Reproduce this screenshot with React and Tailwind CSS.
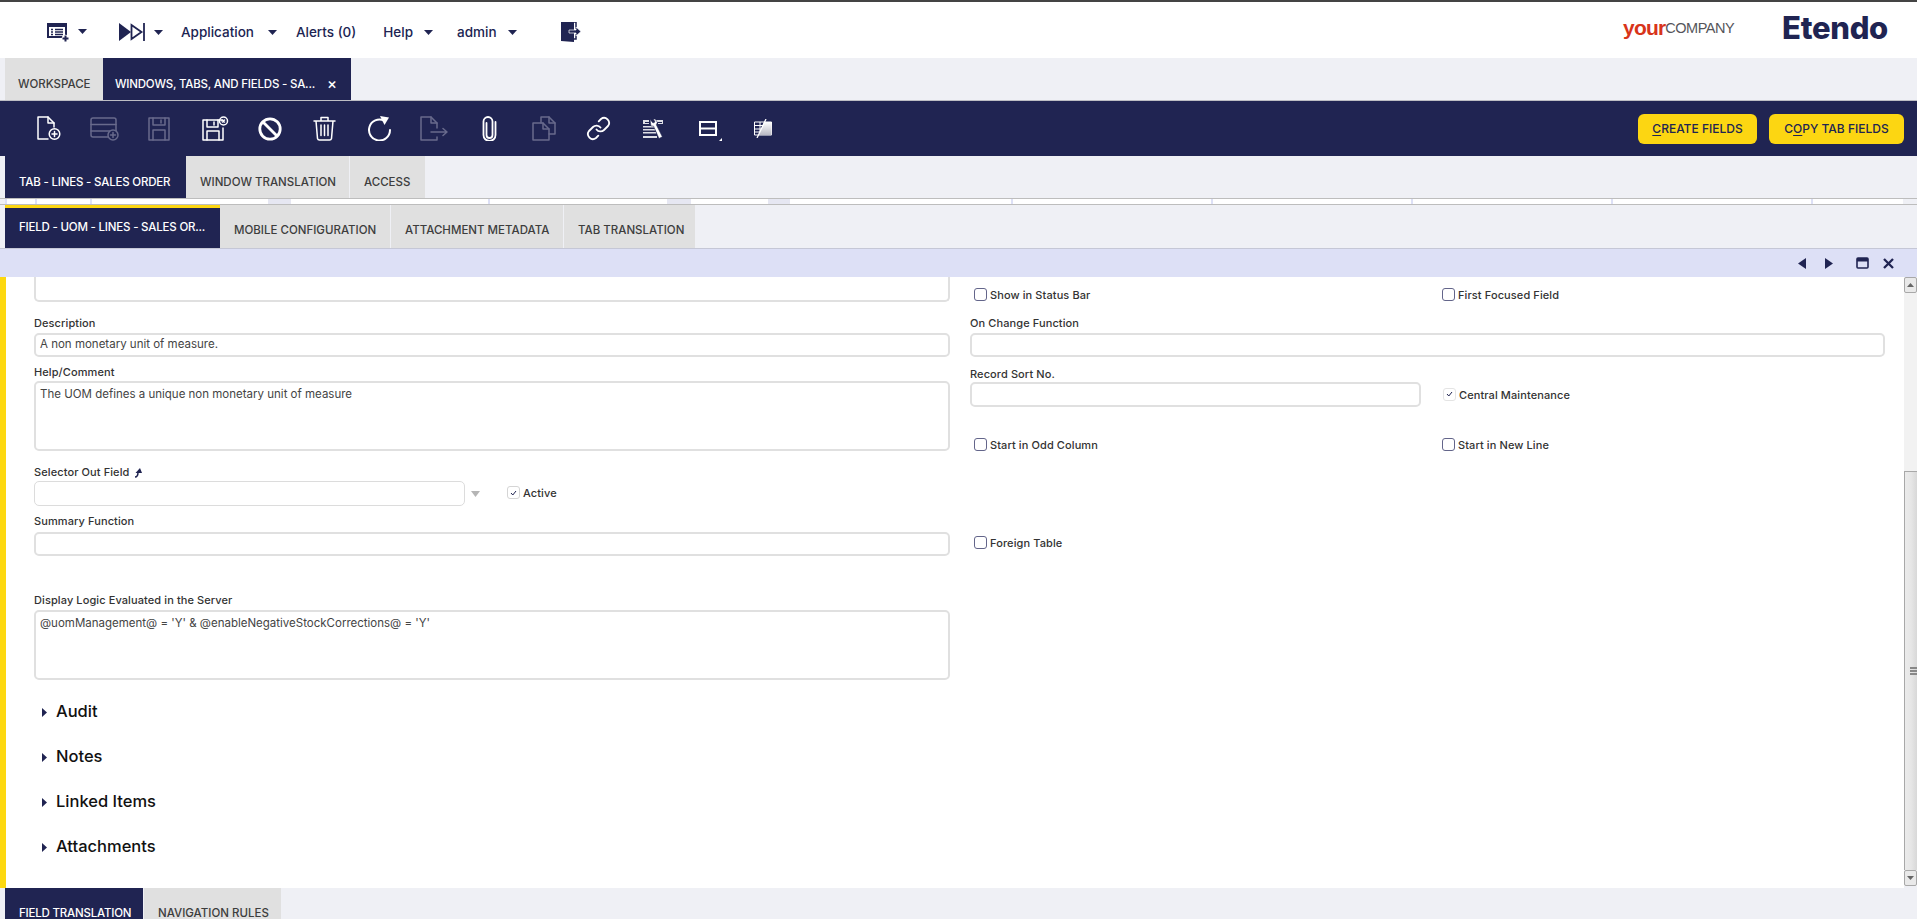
const NAVY = "#202452";

function Caret() {
  return <svg width="9" height="5" viewBox="0 0 9 5" className="shrink-0"><path d="M0 0h9L4.500 5z" fill={NAVY} /></svg>;
}

function NavText({ children, className = "" }) {
  return <span className={"text-[13.500px] font-medium text-[#202452] leading-5 whitespace-nowrap " + className}>{children}</span>;
}

function Header() {
  return (
    <div className="h-[56px] bg-white flex items-center relative">
      <div className="flex items-center h-full pl-[47px] pt-[4px]">
        <svg width="23" height="20" viewBox="0 0 23 20" className="mt-[2px]">
          <path d="M0 0h20v15H0z" fill={NAVY} />
          <path d="M2 4h16v9H2z" fill="#fff" />
          <path d="M4 6.500h2M8 6.500h8M4 9h2M8 9h8M4 11.500h2M8 11.500h8" stroke={NAVY} strokeWidth="1.300" />
          <circle cx="18.500" cy="15.500" r="3.800" fill="#fff" />
          <path d="M18.500 12.500v6M15.500 15.500h6" stroke={NAVY} strokeWidth="2" />
        </svg>
        <span className="ml-[8px] mb-[2px]"><Caret /></span>
        <svg width="26" height="18" viewBox="0 0 26 18" className="ml-[32px]">
          <path d="M0 0l12 9L0 18z" fill={NAVY} />
          <path d="M12.500 2l10 7-10 7z" fill="none" stroke={NAVY} strokeWidth="1.800" />
          <path d="M25 0v18" stroke={NAVY} strokeWidth="1.800" />
        </svg>
        <span className="ml-[9px]"><Caret /></span>
        <NavText className="ml-[18px]">Application</NavText>
        <span className="ml-[14px]"><Caret /></span>
        <NavText className="ml-[19px]">Alerts (0)</NavText>
        <NavText className="ml-[27px]">Help</NavText>
        <span className="ml-[11px]"><Caret /></span>
        <NavText className="ml-[24px]">admin</NavText>
        <span className="ml-[11px]"><Caret /></span>
        <svg width="21" height="20" viewBox="0 0 21 20" className="ml-[44px]">
          <path d="M0 0h13v20l-13-1z" fill={NAVY} />
          <path d="M11 0h4v7" fill="none" stroke={NAVY} strokeWidth="1.500" />
          <path d="M15 12v5h-3" fill="none" stroke={NAVY} strokeWidth="1.500" />
          <path d="M8 8h7V5l5 4.500-5 4.500v-3H8z" fill={NAVY} stroke="#fff" strokeWidth="0.700" />
        </svg>
      </div>
      <div className="ml-auto flex items-center pr-[29px] pb-[6px]">
        <span className="font-[Liberation_Sans,sans-serif] text-[21px] font-bold text-[#d8341a] tracking-[-0.8px] leading-none">your</span>
        <span className="font-[Liberation_Sans,sans-serif] text-[14.500px] text-[#55555a] tracking-[-0.5px] leading-none mt-[2px]">COMPANY</span>
        <span className="ml-[48px] font-[Inter,sans-serif] text-[31px] font-extrabold text-[#202452] tracking-[-0.3px] leading-none">Etendo</span>
      </div>
    </div>
  );
}

function Tab({ label, active, w, pt = "pt-[12px]", pl = "pl-[14px]", h = "h-full", close, top }) {
  return (
    <div
      style={{ width: w }}
      className={
        "shrink-0 flex items-center text-[11.500px] font-medium uppercase whitespace-nowrap overflow-hidden " +
        pl + " " + h + " " +
        (active ? "bg-[#202452] text-white tracking-[-0.2px] " : "bg-[#e0e0e0] text-[#3d3d3d] ") +
        (top ? "border-t-[3px] border-[#fcd612] " : pt)
      }
    >
      {label}
      {close && <span className="ml-[12px] mb-[3px] text-[15px] leading-none">×</span>}
    </div>
  );
}

function Ic({ w, h, dim, children }) {
  return (
    <svg width={w} height={h} viewBox={`0 0 ${w} ${h}`} fill="none" stroke={dim ? "#686a8c" : "#fff"} strokeWidth="1.500" strokeLinecap="round" strokeLinejoin="round" className="shrink-0">
      {children}
    </svg>
  );
}

function Toolbar() {
  return (
    <div className="h-[56px] bg-[#202452] border-t border-[#bdbdc4] flex items-center pl-[37px] pr-[13px]">
      <Ic w={24} h={25}>
        <path d="M11 23H1V1h10l6 6v4" /><path d="M11 1v6h6" />
        <circle cx="17.500" cy="18" r="5.300" /><path d="M17.500 15.500v5M15 18h5" />
      </Ic>
      <span className="ml-[29px]">
        <Ic w={29} h={24} dim>
          <rect x="1" y="1" width="25" height="19" rx="2" /><path d="M1 7.500h25M1 14h25" />
          <circle cx="23" cy="18" r="5" fill={NAVY} /><path d="M23 15.500v5M20.500 18h5" />
        </Ic>
      </span>
      <span className="ml-[28px]">
        <Ic w={24} h={24} dim>
          <path d="M2 1h20v22H2z" /><path d="M6 1v7h12V1M14 3v3M6 23v-10h12v10" />
        </Ic>
      </span>
      <span className="ml-[31px]">
        <Ic w={27} h={25}>
          <path d="M20 5V4H1v20h20V12" /><path d="M5 4v7h11V4M12 6v3M5 24V15h12v9" />
          <circle cx="21.500" cy="5" r="4" /><path d="M20.500 4l2 2M22.500 4l-2 2" />
        </Ic>
      </span>
      <span className="ml-[29px]">
        <Ic w={24} h={24}>
          <circle cx="12" cy="12" r="10.200" strokeWidth="2.800" /><path d="M5 5l14 14" strokeWidth="2.800" strokeLinecap="butt" />
        </Ic>
      </span>
      <span className="ml-[31px]">
        <Ic w={23} h={25}>
          <path d="M1 5h21M8 5V1.500h7V5M3 5l1.500 17.500a2 2 0 0 0 2 1.500h10a2 2 0 0 0 2-1.500L20 5M8 9v10.500M11.500 9v10.500M15 9v10.500" />
        </Ic>
      </span>
      <span className="ml-[31px]">
        <Ic w={25} h={25}>
          <path d="M17 4.500A10.500 10.500 0 1 0 23 14" strokeWidth="2" />
          <path d="M13 0l9 1.500-4.500 7.500z" fill="#fff" stroke="none" />
        </Ic>
      </span>
      <span className="ml-[28px]">
        <Ic w={28} h={25} dim>
          <path d="M17 12V7l-6-6H1v23h16v-3" /><path d="M11 1v6h6M11 16h16M23 12.500l4 3.500-4 3.500" />
        </Ic>
      </span>
      <span className="ml-[33px]">
        <Ic w={17} h={25}>
          <path d="M5.500 7v12a3 3 0 0 0 6 0V5.500a4.500 4.500 0 0 0-9 0V19a6 6 0 0 0 12 0V6" strokeWidth="1.800" />
        </Ic>
      </span>
      <span className="ml-[34px]">
        <Ic w={24} h={25} dim>
          <path d="M9 7V1h8l6 6v11h-6" /><path d="M17 1v6h6" />
          <path d="M1 7h10l6 6v11H1z" /><path d="M11 7v6h6" />
        </Ic>
      </span>
      <span className="ml-[30px]">
        <Ic w={25} h={25}>
          <path d="M10.500 13.500a5 5 0 0 0 7.500.5l4-4a5 5 0 0 0-7-7l-2.300 2.300" strokeWidth="1.800" />
          <path d="M14.500 11.500a5 5 0 0 0-7.500-.5l-4 4a5 5 0 0 0 7 7l2.300-2.300" strokeWidth="1.800" />
        </Ic>
      </span>
      <span className="ml-[32px]">
        <svg width="21" height="20" viewBox="0 0 21 20" className="shrink-0">
          <path d="M0 1h6v2H2v1h4v1H0zM13 1h7v4h-5V4h4V3h-6zM0 7h12v1.500H0zM0 10h12v1.500H0zM0 13h13v1.500H0zM0 17h14v2H0z" fill="#fff" opacity="0.850" />
          <path d="M7 0.500l3 3.500 2-1-1.500-3 1.800 0 2 3.500-1 2.300 6 12-3.300 1.700-5.500-12.500-2.500 0z" fill="#fff" stroke={NAVY} strokeWidth="0.500" />
        </svg>
      </span>
      <span className="ml-[35px] flex items-end">
        <svg width="18" height="15" viewBox="0 0 18 15" className="shrink-0">
          <rect x="1" y="1" width="16" height="13" fill={NAVY} stroke="#fff" strokeWidth="2" />
          <path d="M1 7.500h16" stroke="#fff" strokeWidth="2" />
        </svg>
        <svg width="3" height="3" viewBox="0 0 3 3" className="ml-[2px] mb-[-5px]"><path d="M3 0v3H0z" fill="#fff" /></svg>
      </span>
      <span className="ml-[32px]">
        <svg width="18" height="19" viewBox="0 0 18 19" className="shrink-0">
          <defs>
            <linearGradient id="trg" x1="0" y1="0" x2="0" y2="1"><stop offset="0" stopColor="#fff" /><stop offset="1" stopColor="#b9b9c4" /></linearGradient>
          </defs>
          <path d="M0.500 3h17v13H0.500z" fill="none" stroke="#fff" strokeWidth="1" />
          <path d="M0.500 6.500h9M0.500 10h8M0.500 13h7M6 3v13" stroke="#fff" strokeWidth="1" />
          <path d="M10 3h7.500v13H5z" fill="url(#trg)" />
          <path d="M12 0L3 19" stroke="#fff" strokeWidth="1.300" />
        </svg>
      </span>
      <div className="ml-auto flex items-center gap-[12px]">
        <button className="w-[119px] h-[30px] rounded-[6px] bg-[#fcd612] text-[#202452] text-[12px] font-medium whitespace-nowrap">
          <span className="underline underline-offset-2">C</span>REATE FIELDS
        </button>
        <button className="w-[135px] h-[30px] rounded-[6px] bg-[#fcd612] text-[#202452] text-[12px] font-medium whitespace-nowrap">
          C<span className="underline underline-offset-2">O</span>PY TAB FIELDS
        </button>
      </div>
    </div>
  );
}

const LAV = "bg-[#dde0f6]";
const PALE = "bg-[#e6e7f2]";
const CELLS = [
  [2, LAV], [28, "bg-white"], [2, LAV], [53, "bg-white"], [2, LAV],
  [176, "bg-white"], [23, PALE], [197, "bg-white"], [2, LAV], [177, "bg-white"],
  [24, PALE], [77, "bg-white"], [22, PALE], [221, "bg-white"], [2, LAV],
  [198, "bg-white"], [2, LAV], [198, "bg-white"], [2, LAV], [198, "bg-white"],
  [2, LAV], [198, "bg-white"], [2, LAV], [90, "bg-white"],
];

function GridStrip() {
  return (
    <div className="h-[7px] bg-[#eff0f5] border-t border-b border-[#bdbdbd] flex pl-[5px]">
      {CELLS.map((c, i) => (
        <div key={i} style={{ width: c[0] }} className={"h-full shrink-0 " + c[1]} />
      ))}
    </div>
  );
}

function StatusBar() {
  return (
    <div className="h-[29px] bg-[#dde0f6] border-t border-[#c5c7d6] flex items-center justify-end pr-[23px]">
      <svg width="8" height="11" viewBox="0 0 8 11"><path d="M8 0v11L0 5.500z" fill={NAVY} /></svg>
      <svg width="8" height="11" viewBox="0 0 8 11" className="ml-[19px]"><path d="M0 0v11l8-5.500z" fill={NAVY} /></svg>
      <svg width="13" height="12" viewBox="0 0 13 12" className="ml-[23px]"><rect x="1" y="1" width="11" height="10" rx="1" fill="none" stroke={NAVY} strokeWidth="1.600" /><path d="M1 1h11v3.500H1z" fill={NAVY} /></svg>
      <svg width="11" height="11" viewBox="0 0 11 11" className="ml-[14px]"><path d="M1 1l9 9M10 1l-9 9" stroke={NAVY} strokeWidth="2.300" /></svg>
    </div>
  );
}

function Label({ children, h = "h-[20px]", className = "" }) {
  return <div className={"text-[11px] font-medium tracking-[0.1px] text-[#333] flex items-center whitespace-nowrap " + h + " " + className}>{children}</div>;
}

function Input({ value, h = "h-[24px]", top = false, thin = false, className = "" }) {
  return (
    <div className={
      "w-full bg-white rounded-[5px] text-[11.500px] text-[#444] px-[4px] " +
      (thin ? "border border-[#dcdcdc] " : "border-2 border-[#e0e0e0] ") +
      h + " " +
      (top ? "pt-[3px]" : "flex items-center") + " " + className
    }>
      {value}
    </div>
  );
}

function Check({ checked, soft, label, className = "" }) {
  return (
    <div className={"flex items-center " + className}>
      <span className={
        "w-[13px] h-[13px] rounded-[3px] flex items-center justify-center mb-[2px] " +
        (checked ? (soft ? "border border-[#e4e4e4] " : "border border-[#d5d5d5] ") : "border border-[#63658a] ")
      }>
        {checked && (
          <svg width="7" height="6" viewBox="0 0 7 6"><path d="M1 3l1.800 2L6 1" fill="none" stroke={NAVY} strokeWidth="1" /></svg>
        )}
      </span>
      <span className="ml-[3px] text-[11px] font-medium tracking-[0.1px] text-[#333] whitespace-nowrap">{label}</span>
    </div>
  );
}

function Section({ label }) {
  return (
    <div className="h-[45px] flex items-center pl-[8px]">
      <svg width="5" height="9" viewBox="0 0 5 9" className="mt-[2px]"><path d="M0 0v9l5-4.500z" fill={NAVY} /></svg>
      <span className="ml-[9px] text-[16.500px] font-medium text-[#111]">{label}</span>
    </div>
  );
}

function Scrollbar() {
  return (
    <div className="w-[13px] shrink-0 flex flex-col bg-[#f2f2f2] mb-[2px]">
      <div className="h-[16px] border border-[#a8a8a8] bg-[#e9e9e9] rounded-[2px] flex items-center justify-center">
        <svg width="7" height="4" viewBox="0 0 7 4"><path d="M0 4h7L3.500 0z" fill="#666" /></svg>
      </div>
      <div className="h-[178px]" />
      <div className="flex-1 border-l border-t border-[#a8a8a8] bg-gradient-to-r from-[#ebebeb] via-[#e6e6e6] to-[#d8d8d8] flex flex-col items-center justify-center pl-[4px] gap-[1px]">
        <div className="w-[7px] h-[2px] bg-[#888]" />
        <div className="w-[7px] h-[2px] bg-[#888]" />
        <div className="w-[7px] h-[2px] bg-[#888]" />
      </div>
      <div className="h-[16px] border border-[#a8a8a8] bg-[#e9e9e9] rounded-[2px] flex items-center justify-center">
        <svg width="7" height="4" viewBox="0 0 7 4"><path d="M0 0h7L3.500 4z" fill="#666" /></svg>
      </div>
    </div>
  );
}

function Form() {
  return (
    <div className="flex h-[611px]">
      <div className="w-[6px] shrink-0 bg-[#fdd80f]" />
      <div className="flex-1 bg-white pl-[28px] min-w-0 overflow-hidden">
        <div className="flex h-[25px]">
          <div className="w-[916px] h-full bg-white border-2 border-t-0 border-[#e0e0e0] rounded-b-[5px]" />
          <div className="ml-[20px] flex-1 flex pl-[4px] pt-[10px]">
            <Check label="Show in Status Bar" className="w-[468px] h-[16px]" />
            <Check label="First Focused Field" className="h-[16px]" />
          </div>
        </div>
        <div className="flex mt-[11px]">
          <div className="w-[916px]"><Label>Description</Label><Input value="A non monetary unit of measure." /></div>
          <div className="ml-[20px] w-[915px]"><Label>On Change Function</Label><Input /></div>
        </div>
        <div className="flex mt-[6px]">
          <div className="w-[916px]"><Label h="h-[18px]" className="pt-[1px]">Help/Comment</Label><Input value="The UOM defines a unique non monetary unit of measure" h="h-[70px]" top /></div>
          <div className="ml-[20px] w-[915px] flex flex-col">
            <div className="flex">
              <div className="w-[451px]"><Label h="h-[19px]" className="pt-[3px]">Record Sort No.</Label><Input h="h-[25px]" /></div>
              <Check checked soft label="Central Maintenance" className="ml-[22px] mt-[24px] h-[16px]" />
            </div>
            <div className="flex pl-[4px] mt-[30px]">
              <Check label="Start in Odd Column" className="w-[468px] h-[16px]" />
              <Check label="Start in New Line" className="h-[16px]" />
            </div>
          </div>
        </div>
        <div className="flex mt-[11px]">
          <div className="w-[916px]">
            <Label h="h-[17px]">
              Selector Out Field
              <svg width="9" height="10" viewBox="0 0 9 10" className="ml-[5px]"><path d="M1 9c2 0 3-2 3-5" fill="none" stroke={NAVY} strokeWidth="1.500" /><path d="M1.500 5L6 0l2 5z" fill={NAVY} /></svg>
            </Label>
            <div className="flex items-center h-[25px]">
              <div className="w-[431px]"><Input thin h="h-[25px]" /></div>
              <svg width="9" height="6" viewBox="0 0 9 6" className="ml-[6px]"><path d="M0 0h9L4.500 6z" fill="#b5b5b5" /></svg>
              <Check checked label="Active" className="ml-[27px] h-[16px]" />
            </div>
          </div>
        </div>
        <div className="flex mt-[5px]">
          <div className="w-[916px]"><Label h="h-[21px]">Summary Function</Label><Input /></div>
          <div className="ml-[20px] pl-[4px] pt-[24px]"><Check label="Foreign Table" className="h-[16px]" /></div>
        </div>
        <div className="w-[916px] mt-[35px]">
          <Label h="h-[19px]">Display Logic Evaluated in the Server</Label>
          <Input value="@uomManagement@ = 'Y' & @enableNegativeStockCorrections@ = 'Y'" h="h-[70px]" top />
        </div>
        <div className="mt-[9px]">
          <Section label="Audit" />
          <Section label="Notes" />
          <Section label="Linked Items" />
          <Section label="Attachments" />
        </div>
      </div>
      <Scrollbar />
    </div>
  );
}

export default function App() {
  return (
    <div className="w-[1917px] h-[919px] overflow-hidden bg-[#eff0f5] font-[Inter,sans-serif] border-t-2 border-[#444]">
      <Header />
      <div className="h-[42px] flex pl-[5px]">
        <Tab label="Workspace" w={98} pl="pl-[13px]" />
        <Tab label="Windows, Tabs, and Fields - Sa..." w={248} active close pl="pl-[12px]" />
      </div>
      <Toolbar />
      <div className="h-[42px] flex pl-[5px]">
        <Tab label="Tab - Lines - Sales Order" w={181} active />
        <Tab label="Window Translation" w={163} />
        <div className="w-px" />
        <Tab label="Access" w={75} />
      </div>
      <GridStrip />
      <div className="h-[43px] flex pl-[5px]">
        <Tab label="Field - UOM - Lines - Sales Or..." w={215} active top />
        <Tab label="Mobile Configuration" w={170} pt="pt-[9px]" />
        <div className="w-px" />
        <Tab label="Attachment Metadata" w={172} pt="pt-[9px]" />
        <div className="w-px" />
        <Tab label="Tab Translation" w={131} pt="pt-[9px]" />
      </div>
      <StatusBar />
      <Form />
      <div className="h-[31px] flex pl-[5px]">
        <Tab label="Field Translation" w={138} active pt="pt-[20px]" />
        <div className="w-px" />
        <Tab label="Navigation Rules" w={137} pt="pt-[20px]" />
      </div>
    </div>
  );
}
